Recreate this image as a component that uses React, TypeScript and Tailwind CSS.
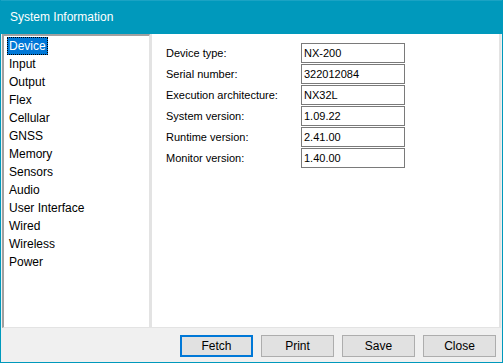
const sections = [
  "Device",
  "Input",
  "Output",
  "Flex",
  "Cellular",
  "GNSS",
  "Memory",
  "Sensors",
  "Audio",
  "User Interface",
  "Wired",
  "Wireless",
  "Power",
];

const info = [
  ["Device type:", "NX-200"],
  ["Serial number:", "322012084"],
  ["Execution architecture:", "NX32L"],
  ["System version:", "1.09.22"],
  ["Runtime version:", "2.41.00"],
  ["Monitor version:", "1.40.00"],
];

export default function App() {
  return (
    <div
      className="flex h-[363px] w-[503px] flex-col bg-[#0099bc] px-px pb-px text-black"
      style={{ fontFamily: '"Liberation Sans", Arial, sans-serif' }}
    >
      <div className="flex h-[34px] shrink-0 items-center border-t border-[#1aa3c4] pb-[2px] pl-[9px] text-[12px] text-white">
        System Information
      </div>

      <div className="flex flex-1 flex-col bg-[#f0f0f0]">
        <div className="flex h-[294px]">
          {/* section list */}
          <div className="ml-px w-[148px] border-t-2 border-l-2 border-r border-b border-t-[#a0a0a0] border-l-[#a0a0a0] border-r-[#e3e3e3] border-b-[#e3e3e3] bg-white pt-[1px] pl-[3px] text-[12px]">
            {sections.map((s, i) => (
              <div key={s} className="flex h-[18px] items-center">
                {i === 0 ? (
                  <span className="border border-dotted border-black bg-[#0078d7] px-[1px] leading-[16px] text-white">
                    {s}
                  </span>
                ) : (
                  <span className="px-[2px] leading-[16px]">{s}</span>
                )}
              </div>
            ))}
          </div>

          {/* details */}
          <div className="mr-[1px] flex-1 border-l-2 border-r-2 border-b border-[#e3e3e3] bg-white pt-[9px] pl-[14px] text-[11px]">
            <div className="flex flex-col gap-[1px]">
              {info.map(([label, value]) => (
                <div key={label} className="flex h-[20px] items-center">
                  <div className="w-[135px]">{label}</div>
                  <div className="flex h-[20px] w-[104px] items-center border border-[#7a7a7a] px-[2px]">
                    {value}
                  </div>
                </div>
              ))}
            </div>
          </div>
        </div>

        <div className="flex gap-[8px] pt-[7px] pl-[179px] text-[12px]">
          <button className="h-[22px] w-[73px] border-2 border-[#0078d7] bg-[#e1e1e1]">Fetch</button>
          <button className="h-[22px] w-[73px] border border-[#adadad] bg-[#e1e1e1]">Print</button>
          <button className="h-[22px] w-[73px] border border-[#adadad] bg-[#e1e1e1]">Save</button>
          <button className="h-[22px] w-[73px] border border-[#adadad] bg-[#e1e1e1]">Close</button>
        </div>
      </div>
    </div>
  );
}
